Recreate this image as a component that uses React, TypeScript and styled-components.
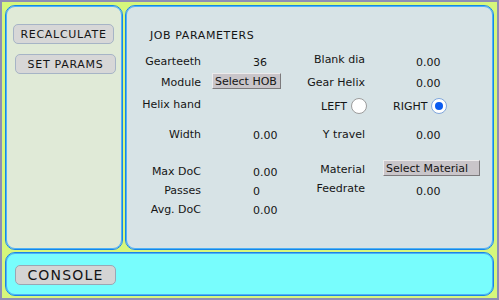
import styled, { createGlobalStyle } from "styled-components";

const GlobalStyle = createGlobalStyle`
  html, body {
    margin: 0;
    padding: 0;
  }
  body {
    font-family: "DejaVu Sans", Verdana, sans-serif;
    font-size: 11px;
    color: #151515;
  }
`;

function App() {
  return (
    <Window>
      <GlobalStyle />
      <SidePanel>
        <PillButton $indent={7}>RECALCULATE</PillButton>
        <PillButton $indent={9}>SET PARAMS</PillButton>
      </SidePanel>
      <JobPanel>
        <Title>JOB PARAMETERS</Title>
        <Rows>
          <Row>
            <Label>Gearteeth</Label>
            <Value>36</Value>
            <Label $lift>Blank dia</Label>
            <Value $wide>0.00</Value>
          </Row>
          <Row $top={1}>
            <Label>Module</Label>
            <QtButton $width={69} $indent={11}>
              Select HOB
            </QtButton>
            <Label>Gear Helix</Label>
            <Value $wide>0.00</Value>
          </Row>
          <Row $top={2}>
            <Label>Helix hand</Label>
            <span />
            <RadioLabel>
              LEFT <Radio />
            </RadioLabel>
            <RadioLabel $indent={26}>
              RIGHT <Radio $checked />
            </RadioLabel>
          </Row>
          <Row $top={10}>
            <Label>Width</Label>
            <Value>0.00</Value>
            <Label>Y travel</Label>
            <Value $wide>0.00</Value>
          </Row>
          <Row $top={17}>
            <Label>Max DoC</Label>
            <Value>0.00</Value>
            <Label $lift>Material</Label>
            <QtButton $width={97} $indent={16} $lift>
              Select Material
            </QtButton>
          </Row>
          <Row $top={-1}>
            <Label>Passes</Label>
            <Value>0</Value>
            <Label $lift>Feedrate</Label>
            <Value $wide>0.00</Value>
          </Row>
          <Row $top={-1}>
            <Label>Avg. DoC</Label>
            <Value>0.00</Value>
          </Row>
        </Rows>
      </JobPanel>
      <ConsolePanel>
        <ConsoleButton>CONSOLE</ConsoleButton>
      </ConsolePanel>
    </Window>
  );
}

export default App;

const Window = styled.div`
  box-sizing: border-box;
  width: 499px;
  height: 300px;
  border: 2px solid #8e8eb4;
  background: #d6f77c;
  padding: 3px 3px 2px 3px;
  display: grid;
  grid-template-columns: 118px 1fr;
  grid-template-rows: 245px 44px;
  gap: 2px;
`;

const Panel = styled.div`
  box-sizing: border-box;
  border: 1px solid #1886e6;
  box-shadow: inset 0 0 0 1px #4eb2f6;
  border-radius: 10px;
`;

const SidePanel = styled(Panel)`
  background: #e0ead7;
  display: flex;
  flex-direction: column;
  align-items: flex-start;
  padding-top: 18px;
  gap: 10px;
`;

const JobPanel = styled(Panel)`
  background: #d7e3e6;
  padding: 2px;
`;

const ConsolePanel = styled(Panel)`
  grid-column: 1 / 3;
  background: #78fdfd;
  padding: 12px 9px;
`;

const PillButton = styled.div<{ $indent: number }>`
  box-sizing: border-box;
  margin-left: ${(p) => p.$indent}px;
  width: 101px;
  height: 20px;
  border: 1px solid #a6b4c6;
  border-radius: 5px;
  background: #d7d7d7;
  display: flex;
  align-items: center;
  justify-content: center;
  letter-spacing: 0.7px;
`;

const ConsoleButton = styled(PillButton).attrs({ $indent: 0 })`
  width: 101px;
  font-size: 14px;
  letter-spacing: 1.2px;
  border-color: #9aa6b4;
  background: #d4d4d4;
`;

const Title = styled.div`
  margin: 21px 0 0 22px;
  line-height: 14px;
  letter-spacing: 0.6px;
`;

const Rows = styled.div`
  margin-top: 8px;
  display: flex;
  flex-direction: column;
`;

const Row = styled.div<{ $top?: number }>`
  display: grid;
  grid-template-columns: 73px 100px 66px 1fr;
  height: 20px;
  align-items: center;
  margin-top: ${(p) => p.$top ?? 0}px;
`;

const Label = styled.span<{ $lift?: boolean }>`
  text-align: right;
  padding-right: 2px;
  white-space: nowrap;
  position: relative;
  top: ${(p) => (p.$lift ? -2 : 0)}px;
  &:first-child {
    padding-right: 0;
  }
`;

const Value = styled.span<{ $wide?: boolean }>`
  padding-left: ${(p) => (p.$wide ? 49 : 52)}px;
  padding-top: 2px;
`;

const QtButton = styled.div<{ $width: number; $indent: number; $lift?: boolean }>`
  box-sizing: border-box;
  width: ${(p) => p.$width}px;
  height: 16px;
  margin-left: ${(p) => p.$indent}px;
  margin-top: ${(p) => (p.$lift ? -6 : -2)}px;
  padding-left: 2px;
  background: #c9c5c9;
  border: 1px solid #ecebec;
  border-right-color: #7c7a7c;
  border-bottom-color: #7c7a7c;
  display: flex;
  align-items: center;
  white-space: nowrap;
`;

const RadioLabel = styled.span<{ $indent?: number }>`
  display: flex;
  align-items: center;
  justify-content: ${(p) => (p.$indent ? "flex-start" : "flex-end")};
  margin-left: ${(p) => p.$indent ?? 0}px;
  gap: 4px;
  margin-top: 4px;
`;

const Radio = styled.span<{ $checked?: boolean }>`
  box-sizing: border-box;
  width: 16px;
  height: 16px;
  border-radius: 50%;
  background: #ffffff;
  border: 1px solid ${(p) => (p.$checked ? "#7fa6dc" : "#9c9c9c")};
  display: flex;
  align-items: center;
  justify-content: center;
  &::after {
    content: "";
    width: 8px;
    height: 8px;
    border-radius: 50%;
    background: ${(p) => (p.$checked ? "#0b5cf0" : "transparent")};
  }
`;
